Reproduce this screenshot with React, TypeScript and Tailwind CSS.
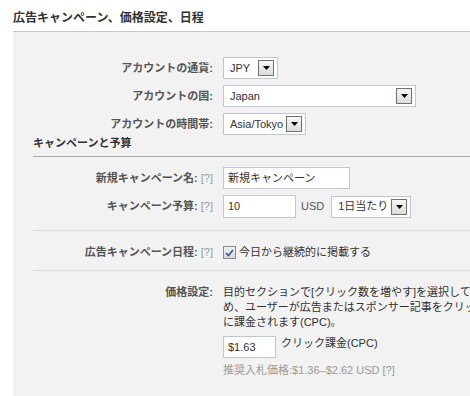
import React from "react";

function Arrow() {
  return (
    <span className="flex h-4 w-4 shrink-0 items-center justify-center border border-[#6f6f6f] bg-gradient-to-b from-[#f6f6f6] to-[#dcdcdc]">
      <svg width="7" height="4" viewBox="0 0 7 4">
        <path d="M0 0h7L3.5 4z" fill="#000" />
      </svg>
    </span>
  );
}

function Select({ value, width }: { value: string; width: string }) {
  return (
    <div
      className={`flex h-[22px] items-center justify-between border border-[#bdc7d8] bg-white pl-[6px] pr-[3px] text-[#333] ${width}`}
    >
      <span>{value}</span>
      <Arrow />
    </div>
  );
}

function Help() {
  return <span className="ml-[3px] font-normal text-[#999]">[?]</span>;
}

function Row({
  label,
  help,
  children,
  className = "",
}: {
  label: string;
  help?: boolean;
  children: React.ReactNode;
  className?: string;
}) {
  return (
    <div className={`flex items-center ${className}`}>
      <div className="w-[180px] shrink-0 text-right font-bold text-[#555]">
        {label}
        {help && <Help />}
      </div>
      <div className="ml-[10px] flex items-center">{children}</div>
    </div>
  );
}

export default function App() {
  return (
    <div className="h-[396px] w-[470px] overflow-hidden bg-white font-['Liberation_Sans','Noto_Sans_CJK_JP',sans-serif] text-[11px] leading-[15px] text-[#333]">
      <div className="pl-[13px] pt-[11px] text-[12px] font-bold leading-[14px] text-[#333]">
        広告キャンペーン、価格設定、日程
      </div>
      <div className="ml-[13px] mt-[6px] h-[400px] w-[600px] border-t border-[#c8c8c8] bg-[#f2f2f2] pl-[20px] pt-[25px]">
        <Row label="アカウントの通貨:">
          <Select value="JPY" width="w-[55px]" />
        </Row>
        <Row label="アカウントの国:" className="mt-[6px]">
          <Select value="Japan" width="w-[193px]" />
        </Row>
        <Row label="アカウントの時間帯:" className="mt-[6px]">
          <Select value="Asia/Tokyo" width="w-[83px]" />
        </Row>

        <div className="mt-[1px] border-b border-[#a8a8a8] pb-[5px] font-bold text-[#333]">
          キャンペーンと予算
        </div>

        <Row label="新規キャンペーン名:" help className="mt-[10px]">
          <div className="flex h-[22px] w-[127px] items-center border border-[#bdc7d8] bg-white pl-[4px]">
            新規キャンペーン
          </div>
        </Row>
        <Row label="キャンペーン予算:" help className="mt-[6px]">
          <div className="flex h-[23px] w-[73px] items-center border border-[#bdc7d8] bg-white pl-[4px]">
            10
          </div>
          <span className="ml-[5px] text-[#555]">USD</span>
          <div className="ml-[7px]">
            <Select value="1日当たり" width="w-[80px]" />
          </div>
        </Row>

        <div className="mt-[12px] border-b border-[#d8d8d8]" />

        <Row label="広告キャンペーン日程:" help className="mt-[14px]">
          <span className="flex h-[13px] w-[13px] items-center justify-center border border-[#8a8a8a] bg-gradient-to-b from-[#f0f0f0] to-[#dadada]">
            <svg width="9" height="8" viewBox="0 0 9 8">
              <path d="M1 4l2.5 2.5L8 1" fill="none" stroke="#3a4ea8" strokeWidth="1.6" />
            </svg>
          </span>
          <span className="ml-[3px]">今日から継続的に掲載する</span>
        </Row>

        <div className="mt-[10px] border-b border-[#d8d8d8]" />

        <div className="mt-[14px] flex items-start">
          <div className="w-[180px] shrink-0 text-right font-bold text-[#555]">価格設定:</div>
          <div className="ml-[10px]">
            <div className="whitespace-nowrap">
              目的セクションで[クリック数を増やす]を選択しているた
              <br />
              め、ユーザーが広告またはスポンサー記事をクリックするたび
              <br />
              に課金されます(CPC)。
            </div>
            <div className="mt-[6px] flex items-start">
              <div className="flex h-[22px] w-[53px] items-center border border-[#bdc7d8] bg-white pl-[4px]">
                $1.63
              </div>
              <span className="ml-[5px]">クリック課金(CPC)</span>
            </div>
            <div className="mt-[5px] whitespace-nowrap text-[#999]">
              推奨入札価格:$1.36–$2.62 USD [?]
            </div>
          </div>
        </div>
      </div>
    </div>
  );
}
